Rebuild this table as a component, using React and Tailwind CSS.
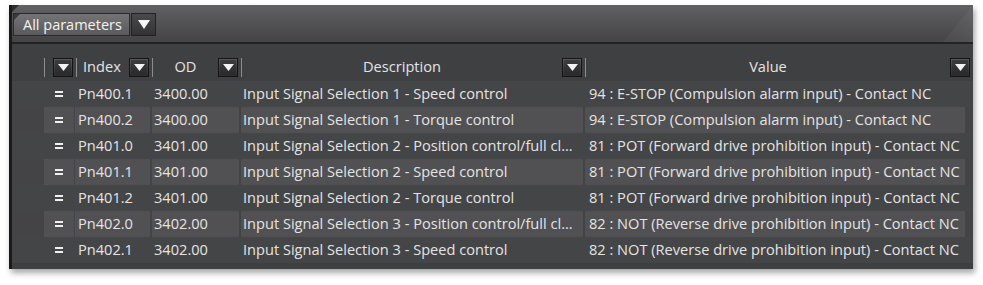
import React from 'react';

const rows = [
  ['Pn400.1', '3400.00', 'Input Signal Selection 1 - Speed control', '94 : E-STOP (Compulsion alarm input) - Contact NC'],
  ['Pn400.2', '3400.00', 'Input Signal Selection 1 - Torque control', '94 : E-STOP (Compulsion alarm input) - Contact NC'],
  ['Pn401.0', '3401.00', 'Input Signal Selection 2 - Position control/full cl...', '81 : POT (Forward drive prohibition input) - Contact NC'],
  ['Pn401.1', '3401.00', 'Input Signal Selection 2 - Speed control', '81 : POT (Forward drive prohibition input) - Contact NC'],
  ['Pn401.2', '3401.00', 'Input Signal Selection 2 - Torque control', '81 : POT (Forward drive prohibition input) - Contact NC'],
  ['Pn402.0', '3402.00', 'Input Signal Selection 3 - Position control/full cl...', '82 : NOT (Reverse drive prohibition input) - Contact NC'],
  ['Pn402.1', '3402.00', 'Input Signal Selection 3 - Speed control', '82 : NOT (Reverse drive prohibition input) - Contact NC'],
];

function DropButton() {
  return (
    <div className="w-[20px] h-[19px] flex-shrink-0 border border-[#141414] bg-gradient-to-b from-[#5a5a5c] to-[#2e2e30] p-[1px]">
      <div className="w-full h-full bg-gradient-to-b from-[#3c3c3e] to-[#2a2a2c] flex items-center justify-center">
        <svg width="11" height="7" viewBox="0 0 11 7">
          <polygon points="0,0 11,0 5.5,7" fill="#f2f2f2" />
        </svg>
      </div>
    </div>
  );
}

function EqIcon() {
  return (
    <div className="flex flex-col gap-[2px] w-[8px]">
      <span className="h-[2px] bg-[#f0f0f0]" />
      <span className="h-[2px] bg-[#f0f0f0]" />
    </div>
  );
}

function HeaderCol({ width, label, align = 'center' }) {
  return (
    <div className={`${width} h-full flex items-center`}>
      <span className="w-px h-[19px] bg-[#8e8e90]" />
      <div className={`flex-1 flex ${align === 'center' ? 'justify-center' : 'justify-start pl-[6px]'}`}>
        {label}
      </div>
      <DropButton />
      <span className="w-[3px]" />
    </div>
  );
}

export default function App() {
  return (
    <div className="w-[983px] h-[285px] bg-white pt-[5px] pl-[9px] font-['Open_Sans',sans-serif] text-[14.6px] text-[#e4e4e4]">
      <div className="relative w-[964px] h-[264px] bg-[#3e3f41] border-l-[3px] border-[#1a1a1b] shadow-[2px_4px_6px_rgba(0,0,0,0.35)] flex flex-col overflow-hidden">
        {/* toolbar */}
        <div className="relative h-[37px] bg-gradient-to-b from-[#616163] to-[#444446] flex items-start pt-[8px] pl-[1px]">
          <div className="relative w-[117px] h-[23px] border border-[#2a2a2a] bg-gradient-to-b from-[#747476] to-[#5a5a5c] flex items-center pl-[9px] text-[14.5px] text-[#f4f4f4]">
            All parameters
            <span className="absolute left-0 top-0 w-0 h-0 border-t-[6px] border-r-[6px] border-t-[#3a3a3c] border-r-transparent" />
          </div>
          <div className="w-[25px] h-[23px] ml-[1px] border border-[#222] bg-gradient-to-b from-[#4a4a4c] to-[#333335] flex items-center justify-center">
            <svg width="12" height="9" viewBox="0 0 12 9">
              <polygon points="0,0 12,0 6,9" fill="#f6f6f6" />
            </svg>
          </div>
          <span className="absolute right-0 top-0 w-[30px] h-[37px] bg-gradient-to-bl from-[#6a6a6c] to-[#4e4e50] [clip-path:polygon(100%_0,100%_100%,0_100%)] opacity-60" />
          <span className="absolute left-0 top-0 w-0 h-0 border-t-[7px] border-r-[7px] border-t-[#2e2e30] border-r-transparent" />
        </div>
        <div className="h-[2px] bg-[#232324]" />

        {/* column header */}
        <div className="h-[37px] flex items-end pb-[4px] bg-[#3f4042]">
          <div className="h-[20px] flex w-full">
            <div className="w-[32px]" />
            <HeaderCol width="w-[32px]" label={null} />
            <HeaderCol width="w-[76px]" label="Index" align="left" />
            <HeaderCol width="w-[89px]" label="OD" />
            <HeaderCol width="w-[344px]" label="Description" />
            <HeaderCol width="w-[388px]" label="Value" />
          </div>
        </div>

        {/* rows */}
        <div className="flex flex-col">
          {rows.map((r, i) => {
            const alt = i % 2 === 1;
            const cell = alt ? 'bg-[#515153]' : '';
            return (
              <div key={r[0]} className={`h-[26px] flex ${alt ? 'bg-[#444446]' : 'bg-[#444547]'}`}>
                <div className="w-[32px]" />
                <div className="w-[31px] pr-[1px]">
                  <div className={`h-full flex items-center justify-center ${cell}`}>
                    <EqIcon />
                  </div>
                </div>
                <div className="w-[77px] pr-[2px]">
                  <div className={`h-full flex items-center pl-[3px] ${cell}`}>{r[0]}</div>
                </div>
                <div className="w-[89px] pr-[2px]">
                  <div className={`h-full flex items-center pl-[2px] ${cell}`}>{r[1]}</div>
                </div>
                <div className="w-[344px] pr-[2px]">
                  <div className={`h-full flex items-center pl-[2px] whitespace-nowrap overflow-hidden ${cell}`}>{r[2]}</div>
                </div>
                <div className="w-[380px]">
                  <div className={`h-full flex items-center pl-[4px] whitespace-nowrap overflow-hidden ${cell}`}>{r[3]}</div>
                </div>
              </div>
            );
          })}
        </div>
      </div>
    </div>
  );
}
